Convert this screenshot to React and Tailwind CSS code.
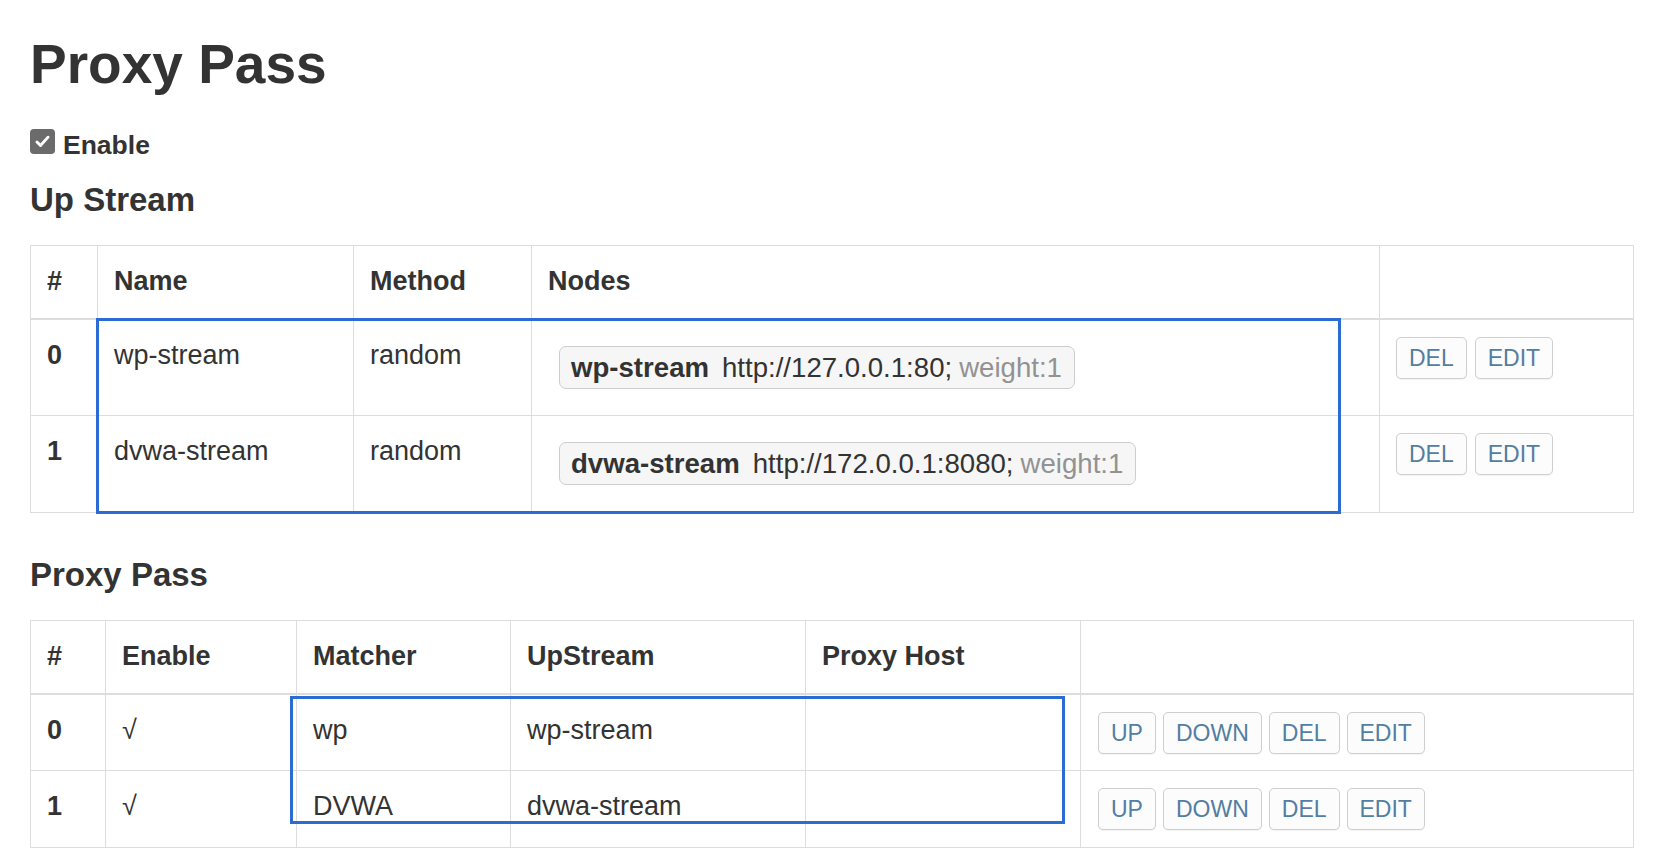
import React from 'react';

const upstreams = [
  { id: 0, name: 'wp-stream', method: 'random', url: 'http://127.0.0.1:80;', weight: 'weight:1' },
  { id: 1, name: 'dvwa-stream', method: 'random', url: 'http://172.0.0.1:8080;', weight: 'weight:1' }
];

const passes = [
  { id: 0, matcher: 'wp', upstream: 'wp-stream', host: '' },
  { id: 1, matcher: 'DVWA', upstream: 'dvwa-stream', host: '' }
];

const Btn = ({ children }) => (
  <button className="h-[42px] px-[12px] border border-[#cfcfcf] rounded-[5px] bg-[#fcfcfc] text-[23px] leading-[30px] text-[#527ea3] shadow-[0_1px_1px_rgba(0,0,0,0.05)]">
    {children}
  </button>
);

const th = 'border border-[#ddd] border-b-2 align-top text-left font-bold pt-[16px] px-[16px] leading-[38px]';
const td = 'border border-[#ddd] align-top pt-[16px] px-[16px] leading-[38px]';

const CheckBox = () => (
  <div className="w-[25px] h-[25px] rounded-[4px] bg-[#6b6b6b] flex items-center justify-center">
    <svg width="19" height="19" viewBox="0 0 24 24" fill="none" stroke="white" strokeWidth="3.6" strokeLinecap="round" strokeLinejoin="round">
      <path d="M5 12.5l4.5 4.5L19 6.5" />
    </svg>
  </div>
);

export default function App() {
  return (
    <div className="min-h-screen bg-white pl-[30px] text-[#333] font-['Liberation_Sans',Arial,Helvetica,sans-serif]">
      <h1 className="pt-[34px] text-[55px] leading-[60px] font-bold">Proxy Pass</h1>

      <div className="mt-[35px] flex items-start gap-[8px]">
        <CheckBox />
        <span className="mt-[3px] text-[26.5px] leading-[26px] font-bold">Enable</span>
      </div>

      <h3 className="mt-[22px] text-[33px] leading-[40px] font-bold">Up Stream</h3>

      <div className="relative mt-[25px] w-[1603px]">
        <table className="w-[1603px] table-fixed border-collapse text-[27px]">
          <colgroup>
            <col className="w-[67px]" />
            <col className="w-[256px]" />
            <col className="w-[178px]" />
            <col className="w-[848px]" />
            <col className="w-[254px]" />
          </colgroup>
          <thead>
            <tr className="h-[73px]">
              <th className={th}>#</th>
              <th className={th}>Name</th>
              <th className={th}>Method</th>
              <th className={th}>Nodes</th>
              <th className={th}></th>
            </tr>
          </thead>
          <tbody>
            {upstreams.map((u) => (
              <tr key={u.id} className="h-[97px]">
                <td className={`${td} font-bold`}>{u.id}</td>
                <td className={td}>{u.name}</td>
                <td className={td}>{u.method}</td>
                <td className={td}>
                  <div className="mt-[10px] ml-[11px] inline-flex items-center h-[43px] pl-[11px] pr-[12px] border border-[#cdcdcd] rounded-[7px] bg-[#f6f6f6] text-[27.6px] leading-[35px] whitespace-nowrap">
                    <b>{u.name}</b>
                    <span className="ml-[13px]">{u.url}</span>
                    <span className="ml-[7px] text-[#929292]">{u.weight}</span>
                  </div>
                </td>
                <td className={td}>
                  <div className="pt-[1px] flex gap-[8px]">
                    <Btn>DEL</Btn>
                    <Btn>EDIT</Btn>
                  </div>
                </td>
              </tr>
            ))}
          </tbody>
        </table>
        <div className="absolute left-[66px] top-[73px] w-[1245px] h-[196px] border-[3px] border-[#2b6cd4] pointer-events-none" />
      </div>

      <h3 className="mt-[42px] text-[33px] leading-[40px] font-bold">Proxy Pass</h3>

      <div className="relative mt-[25px] w-[1603px]">
        <table className="w-[1603px] table-fixed border-collapse text-[27px]">
          <colgroup>
            <col className="w-[75px]" />
            <col className="w-[191px]" />
            <col className="w-[214px]" />
            <col className="w-[295px]" />
            <col className="w-[275px]" />
            <col className="w-[553px]" />
          </colgroup>
          <thead>
            <tr className="h-[73px]">
              <th className={th}>#</th>
              <th className={th}>Enable</th>
              <th className={th}>Matcher</th>
              <th className={th}>UpStream</th>
              <th className={th}>Proxy Host</th>
              <th className={th}></th>
            </tr>
          </thead>
          <tbody>
            {passes.map((p) => (
              <tr key={p.id} className="h-[77px]">
                <td className={`${td} font-bold`}>{p.id}</td>
                <td className={td}>√</td>
                <td className={td}>{p.matcher}</td>
                <td className={td}>{p.upstream}</td>
                <td className={td}>{p.host}</td>
                <td className={td}>
                  <div className="pt-[1px] pl-[1px] flex gap-[7px]">
                    <Btn>UP</Btn>
                    <Btn>DOWN</Btn>
                    <Btn>DEL</Btn>
                    <Btn>EDIT</Btn>
                  </div>
                </td>
              </tr>
            ))}
          </tbody>
        </table>
        <div className="absolute left-[260px] top-[76px] w-[775px] h-[128px] border-[3px] border-[#2b6cd4] pointer-events-none" />
      </div>
    </div>
  );
}
